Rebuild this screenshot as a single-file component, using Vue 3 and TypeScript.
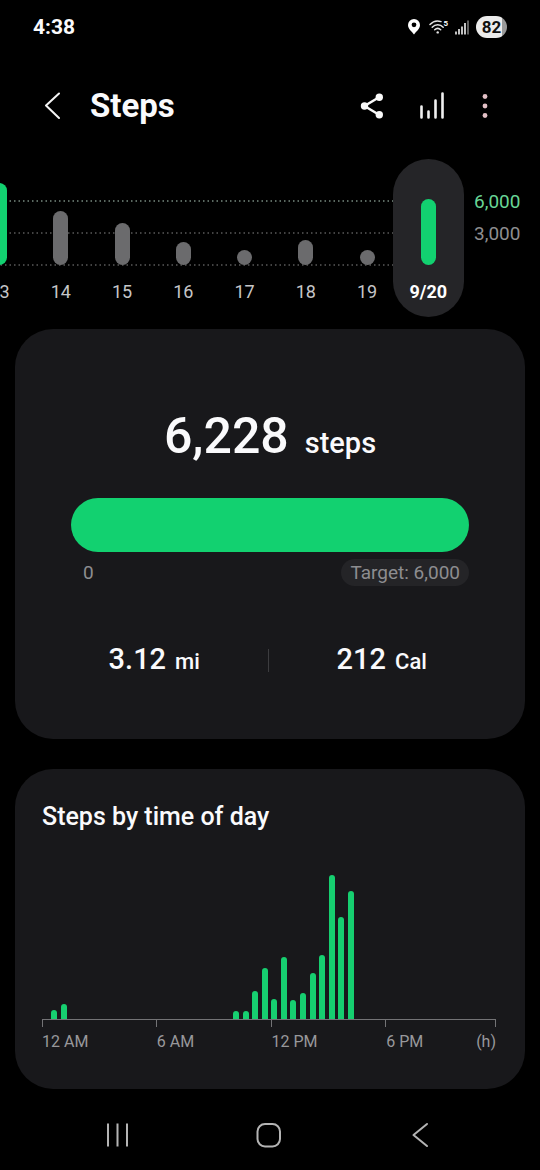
<script setup lang="ts">
interface Day {
  label: string
  height: number
  reached?: boolean
  selected?: boolean
}

const days: Day[] = [
  { label: '13', height: 82, reached: true },
  { label: '14', height: 54 },
  { label: '15', height: 42 },
  { label: '16', height: 23 },
  { label: '17', height: 15 },
  { label: '18', height: 25 },
  { label: '19', height: 15 },
  { label: '9/20', height: 66, reached: true, selected: true },
]

const slotHeights: Record<number, number> = {
  1: 9, 2: 15, 20: 8, 21: 8, 22: 28, 23: 51, 24: 20, 25: 62,
  26: 19, 27: 26, 28: 46, 29: 64, 30: 144, 31: 102, 32: 128,
}
const slots = Array.from({ length: 48 }, (_, i) => slotHeights[i] ?? 0)
const hours = ['12 AM', '6 AM', '12 PM', '6 PM']
</script>

<template>
  <div class="screen">
    <div class="status">
      <span class="clock">4:38</span>
      <div class="indicators">
        <svg class="pin" width="12" height="16" viewBox="0 0 12 16" aria-hidden="true">
          <path fill="#fff" fill-rule="evenodd" d="M6 0a6 6 0 0 0-6 6c0 4 4 6.500 6 9.500C8 12.500 12 10 12 6a6 6 0 0 0-6-6Zm0 3.400a2.400 2.400 0 1 1 0 4.800 2.400 2.400 0 0 1 0-4.800Z" />
        </svg>
        <span class="wifi">
          <svg width="18" height="14" viewBox="0 0 18 14" aria-hidden="true">
            <g fill="none" stroke="#e4e4e4" stroke-width="1.500" stroke-linecap="round">
              <path d="M1 4.500C4 1.200 8.500.300 12 1.600" />
              <path d="M3.200 7.200c3-3.200 8-3.200 11 0" />
              <path d="M5.700 9.800c1.800-1.800 4.200-1.800 6 0" />
            </g>
            <circle cx="8.700" cy="12.400" r="1.200" fill="#e4e4e4" />
          </svg>
          <span class="band">5</span>
        </span>
        <svg class="signal" width="14" height="15" viewBox="0 0 14 15" aria-hidden="true">
          <path stroke="#f2f2f2" stroke-width="1.600" d="M1 14.500v-3M4 14.500V9M7 14.500V6.500M10 14.500V3" />
          <path stroke="#777" stroke-width="1.600" d="M13 14.500V.500" />
        </svg>
        <span class="battery">82</span>
      </div>
    </div>

    <header class="bar">
      <button class="icon back" aria-label="Back">
        <svg width="16" height="28" viewBox="0 0 16 28">
          <path fill="none" stroke="#f4f4f4" stroke-width="2" stroke-linecap="round" stroke-linejoin="round" d="M15 1.500 2 13.500l13 12.500" />
        </svg>
      </button>
      <h1>Steps</h1>
      <button class="icon share" aria-label="Share">
        <svg width="24" height="26" viewBox="0 0 24 26">
          <path fill="none" stroke="#fafafa" stroke-width="2.500" d="M19.500 4 4.500 13l15 9" />
          <g fill="#fafafa"><circle cx="4.500" cy="13" r="3.700" /><circle cx="19.300" cy="4.200" r="3.700" /><circle cx="19.300" cy="21.800" r="3.700" /></g>
        </svg>
      </button>
      <button class="icon trends" aria-label="Trends">
        <svg width="26" height="28" viewBox="0 0 26 28">
          <path fill="none" stroke="#f0f0f0" stroke-width="2.600" stroke-linecap="round" d="M2.500 14.500v11M9.500 19.500v6M16.500 8.500v17M23.500 1.500v24" />
        </svg>
      </button>
      <button class="icon more" aria-label="More options">
        <svg width="6" height="26" viewBox="0 0 6 26">
          <g fill="#e3c0c6"><circle cx="3" cy="3.500" r="2.400" /><circle cx="3" cy="13" r="2.400" /><circle cx="3" cy="22.500" r="2.400" /></g>
        </svg>
      </button>
    </header>

    <section class="week" aria-label="Daily steps">
      <div class="plot">
        <div class="guides">
          <svg v-for="n in 3" :key="n" width="100%" height="2" :class="{ goal: n === 1 }" aria-hidden="true">
            <line x1="0" x2="100%" y1="1" y2="1" stroke="currentColor" stroke-width="1.500" stroke-dasharray="1.500 3" />
          </svg>
        </div>
        <div class="days">
          <button v-for="d in days" :key="d.label" class="day" :class="{ selected: d.selected, reached: d.reached }">
            <span class="stem" :style="{ height: d.height + 'px' }"></span>
            <span class="date">{{ d.label }}</span>
          </button>
        </div>
      </div>
      <div class="scale">
        <span class="goal">6,000</span>
        <span>3,000</span>
      </div>
    </section>

    <main>
      <section class="card summary">
        <p class="total"><strong>6,228</strong><span>steps</span></p>
        <div class="progress" role="progressbar" aria-label="Steps" aria-valuemin="0" aria-valuemax="6000" aria-valuenow="6000"></div>
        <div class="range"><span>0</span><span class="target">Target: 6,000</span></div>
        <div class="stats">
          <p><strong>3.12</strong><span>mi</span></p>
          <i></i>
          <p><strong>212</strong><span>Cal</span></p>
        </div>
      </section>

      <section class="card hourly">
        <h2>Steps by time of day</h2>
        <div class="slots">
          <span v-for="(h, i) in slots" :key="i" :style="{ height: h + 'px' }"></span>
        </div>
        <div class="ticks"><i v-for="h in hours" :key="h"></i></div>
        <div class="hours">
          <span v-for="h in hours" :key="h">{{ h }}</span>
          <span class="unit">(h)</span>
        </div>
      </section>
    </main>

    <nav>
      <button aria-label="Recent apps">
        <svg width="24" height="26" viewBox="0 0 24 26"><path fill="none" stroke="#b4b4b4" stroke-width="2" d="M2 1.500v23M11.500 1.500v23M21 1.500v23" /></svg>
      </button>
      <button aria-label="Home">
        <svg width="26" height="26" viewBox="0 0 26 26"><rect x="1.500" y="2" width="22.500" height="22.500" rx="7.500" fill="none" stroke="#b4b4b4" stroke-width="2" /></svg>
      </button>
      <button aria-label="Back">
        <svg width="26" height="26" viewBox="0 0 26 26"><path fill="none" stroke="#b4b4b4" stroke-width="2" stroke-linecap="round" stroke-linejoin="round" d="M19 2 5.500 13 19 24" /></svg>
      </button>
    </nav>
  </div>
</template>

<style>
body {
  background: #000;
}
</style>

<style scoped>
.screen {
  background: #000;
  color: #fafafc;
  font-family: Roboto, "Liberation Sans", sans-serif;
  overflow: hidden;
}
.screen * {
  box-sizing: border-box;
}
h1, h2, p {
  margin: 0;
}
button {
  border: 0;
  padding: 0;
  background: none;
  color: inherit;
  font: inherit;
}
svg {
  display: block;
}
.status {
  display: flex;
  align-items: center;
  justify-content: space-between;
  height: 54px;
  padding: 0 33px;
}
.clock {
  font-size: 21px;
  font-weight: 700;
}
.indicators {
  display: flex;
  align-items: center;
}
.wifi {
  display: flex;
  margin-left: 9px;
}
.band {
  margin-left: -4px;
  font-size: 8px;
  line-height: 8px;
  font-weight: 700;
}
.signal {
  margin-left: 7px;
}
.battery {
  width: 31px;
  height: 22px;
  margin-left: 7px;
  border-radius: 11px;
  background: linear-gradient(90deg, #ececec 83%, #999 83%);
  color: #111;
  font-size: 17px;
  line-height: 22px;
  font-weight: 700;
  text-align: center;
}
.bar {
  display: flex;
  align-items: center;
  height: 104px;
  padding: 0 52px 0 44px;
}
h1 {
  flex: 1;
  margin-left: 30px;
  font-size: 33px;
  line-height: 40px;
  font-weight: 700;
}
.trends {
  margin-left: 35px;
}
.more {
  margin-left: 37px;
}
.week {
  display: grid;
  grid-template-columns: 1fr 80px;
  padding-top: 1px;
}
.plot {
  display: grid;
  margin-left: -31px;
}
.guides, .days {
  grid-area: 1 / 1;
}
.guides {
  display: flex;
  flex-direction: column;
  gap: 30px;
  margin-right: 40px;
  padding-top: 41px;
  color: #5a5a5a;
}
.guides .goal {
  color: #788a80;
}
.days {
  display: flex;
}
.day {
  flex: 1 1 0;
  display: flex;
  flex-direction: column;
  align-items: center;
  justify-content: flex-end;
  height: 158px;
  padding-bottom: 15px;
  font-size: 18px;
  line-height: 20px;
  color: #c6c6c8;
  z-index: 1;
}
.stem {
  width: 15px;
  margin-bottom: 17px;
  border-radius: 8px;
  background: #6b6b6d;
}
.reached .stem {
  background: #12d170;
}
.selected {
  margin: 0 -4px 0 -5px;
  flex-grow: 1;
  flex-basis: 10px;
  border-radius: 36px;
  background: #252528;
  color: #fff;
  font-weight: 700;
}
.scale {
  display: flex;
  flex-direction: column;
  gap: 12px;
  padding: 33px 0 0 14px;
  font-size: 19px;
  line-height: 20px;
  color: #8e8e90;
}
.scale .goal {
  color: #68d596;
}
main {
  display: flex;
  flex-direction: column;
  gap: 30px;
  padding: 12px 15px 0;
}
.card {
  border-radius: 38px;
  background: #18181b;
}
.summary {
  height: 410px;
  padding: 77px 56px 0;
}
.total {
  display: flex;
  align-items: baseline;
  justify-content: center;
  gap: 16px;
  font-size: 29px;
  line-height: 60px;
  font-weight: 500;
}
.total strong {
  font-size: 50px;
  font-weight: 500;
}
.progress {
  height: 54px;
  margin-top: 25px;
  border-radius: 27px;
  background: #12d170;
}
.range {
  display: flex;
  justify-content: space-between;
  margin-top: 7px;
  padding-left: 12px;
  font-size: 19px;
  line-height: 27px;
  color: #8d8d90;
}
.target {
  padding: 0 9px;
  border-radius: 14px;
  background: #242427;
}
.stats {
  display: grid;
  grid-template-columns: 1fr 1px 1fr;
  align-items: center;
  margin: 54px -26px 0 -30px;
}
.stats p {
  display: flex;
  align-items: baseline;
  justify-content: center;
  gap: 9px;
  font-size: 22px;
  line-height: 38px;
  font-weight: 500;
}
.stats strong {
  font-size: 29px;
  font-weight: 500;
}
.stats i {
  height: 23px;
  background: #3c3c3f;
}
.hourly {
  height: 320px;
  padding: 32px 29px 0 27px;
}
h2 {
  font-size: 25px;
  line-height: 32px;
  font-weight: 500;
}
.slots {
  display: grid;
  grid-template-columns: repeat(48, 1fr);
  align-items: end;
  justify-items: center;
  height: 186px;
  margin: 0 -3px 0 -2px;
}
.slots span {
  width: 6px;
  border-radius: 3px 3px 0 0;
  background: #16cf70;
}
.ticks {
  display: grid;
  grid-template-columns: 115fr 115fr 115fr 110fr;
  height: 8px;
  border-top: 1px solid #737376;
  border-right: 1px solid #737376;
}
.ticks i {
  border-left: 1px solid #737376;
}
.hours {
  display: grid;
  grid-template-columns: 115fr 115fr 115fr 80fr 30fr;
  margin-top: 4px;
  font-size: 16px;
  line-height: 22px;
  color: #98989b;
}
.unit {
  text-align: right;
}
nav {
  display: flex;
  align-items: center;
  justify-content: space-between;
  height: 81px;
  padding: 11px 106px 0;
}
nav button {
  display: block;
}
</style>
